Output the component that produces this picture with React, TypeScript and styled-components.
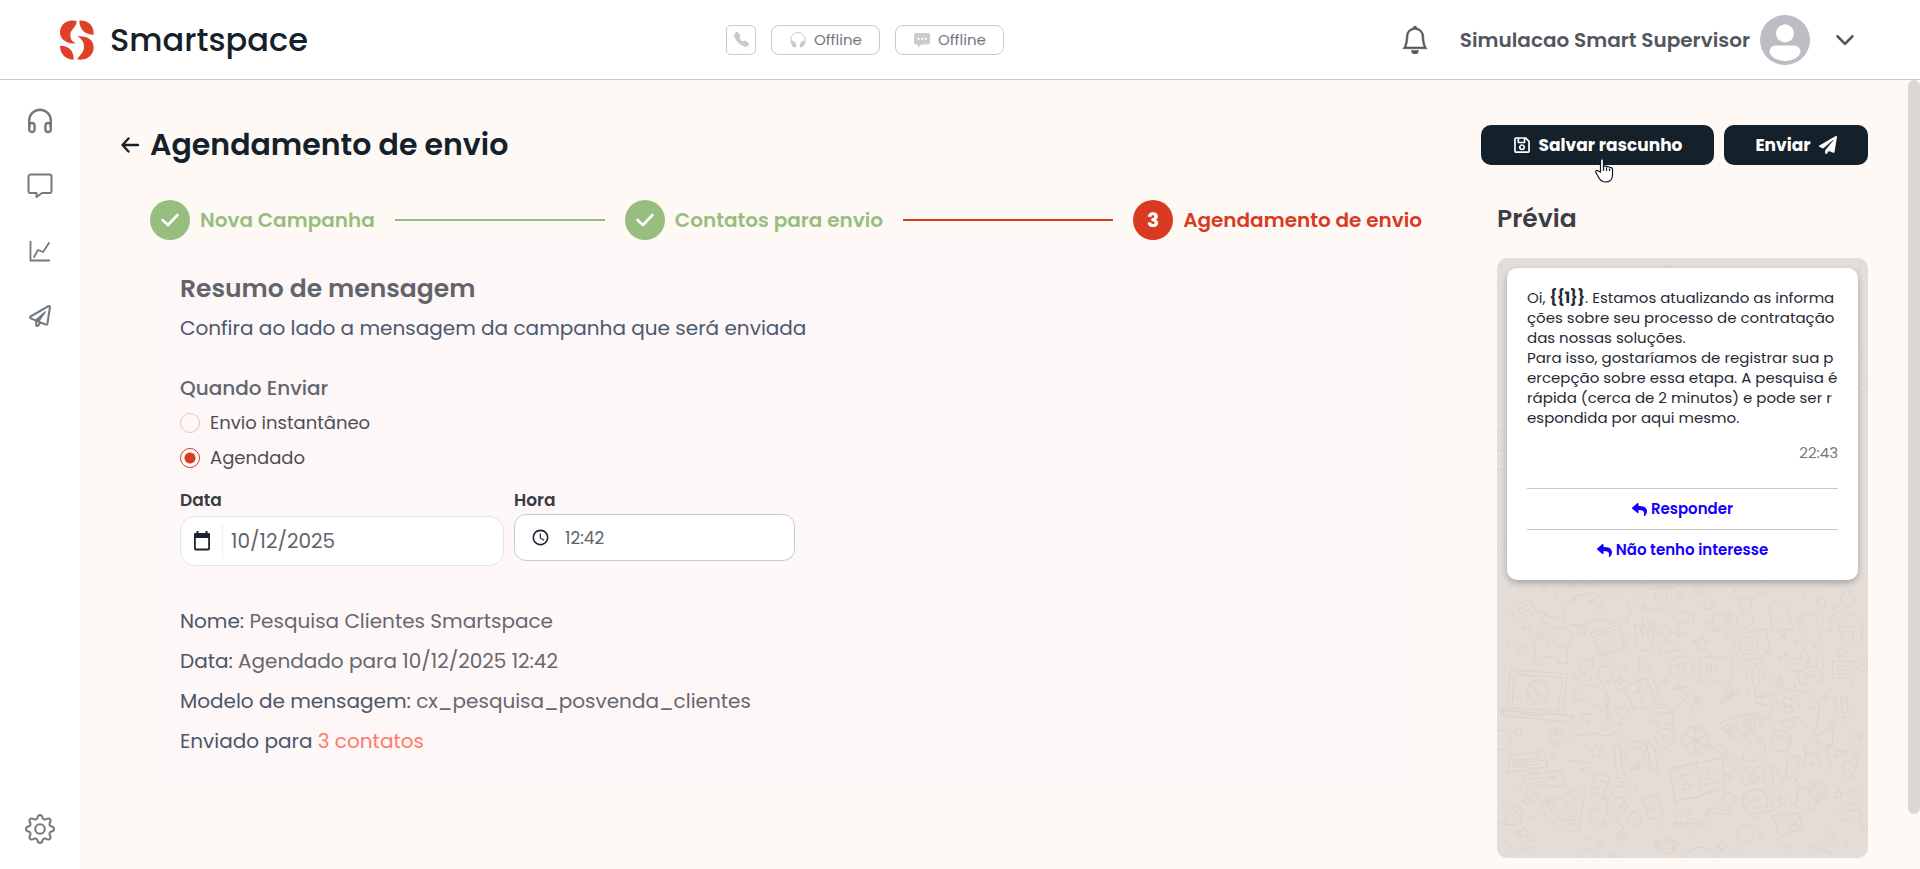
import React, { useState } from 'react';
import styled, { createGlobalStyle } from 'styled-components';
import { BsBell, BsChevronDown, BsTelephoneFill } from 'react-icons/bs';
import { FaPaperPlane, FaRegPaperPlane, FaRegSave, FaReply } from 'react-icons/fa';
import { MdAccessTime } from 'react-icons/md';

const GlobalStyle = createGlobalStyle`
  *, *::before, *::after { box-sizing: border-box; }
  body { margin: 0; background: #fff9f5; font-family: Poppins, Inter, "Liberation Sans", sans-serif; color: #14212a; }
  button, input { font: inherit; }
  h1, h2, h3, p, ol, ul, fieldset { margin: 0; padding: 0; border: 0; }
  svg { display: block; flex: none; }
`;

const Page = styled.div`
  display: flex;
  flex-direction: column;
  min-height: 100vh;
`;

const Header = styled.header`
  display: flex;
  align-items: center;
  justify-content: space-between;
  height: 80px;
  padding: 0 60px;
  background: #fff;
  border-bottom: 1px solid #c9c9c9;
`;

const Brand = styled.a`
  display: flex;
  align-items: center;
  gap: 16px;
  padding-right: 22px;
  color: #14212a;
  text-decoration: none;
  font-size: 32px;
  font-weight: 500;
  line-height: 40px;
`;

const StatusGroup = styled.div`
  display: flex;
  gap: 15px;
`;

const StatusButton = styled.button<{ $square?: boolean }>`
  display: flex;
  align-items: center;
  justify-content: center;
  gap: ${({ $square }) => ($square ? 0 : 8)}px;
  width: ${({ $square }) => ($square ? 30 : 109)}px;
  height: 30px;
  padding: 0;
  border: 1px solid #c7cbcd;
  border-radius: ${({ $square }) => ($square ? 5 : 8)}px;
  background: #fff;
  color: #737480;
  font-size: 15px;

  svg { color: #c7cbcb; }
`;

const UserArea = styled.div`
  display: flex;
  align-items: center;
  justify-content: flex-end;
`;

const IconButton = styled.button`
  display: flex;
  align-items: center;
  justify-content: center;
  padding: 0;
  border: 0;
  background: none;
  color: inherit;
`;

const Bell = styled(IconButton)`
  margin-right: 31px;
  color: #54555f;
`;

const UserName = styled.span`
  margin-right: 10px;
  color: #54555f;
  font-size: 20px;
  font-weight: 600;
`;

const UserMenu = styled(IconButton)`
  margin: 0 5px 0 25px;
  color: #54555f;
`;

const Body = styled.div`
  display: flex;
  flex: 1;
`;

const Sidebar = styled.nav`
  display: flex;
  flex-direction: column;
  align-items: center;
  justify-content: space-between;
  width: 80px;
  padding: 26px 0 25px;
  background: #fff;
`;

const SideList = styled.ul`
  display: flex;
  flex-direction: column;
  gap: 35px;
  list-style: none;
`;

const SideLink = styled.a`
  display: flex;
  align-items: center;
  justify-content: center;
  width: 30px;
  height: 30px;
  color: #727a80;
`;

const Main = styled.main`
  flex: 1;
  min-width: 0;
  padding: 45px 40px 10px;
`;

const TitleRow = styled.div`
  display: flex;
  align-items: center;
  justify-content: space-between;
  height: 40px;
`;

const TitleGroup = styled.div`
  display: flex;
  align-items: center;
  gap: 10px;
`;

const Title = styled.h1`
  font-size: 30px;
  font-weight: 600;
  line-height: 40px;
`;

const Actions = styled.div`
  display: flex;
  gap: 10px;
`;

const ActionButton = styled.button<{ $width: number }>`
  position: relative;
  display: flex;
  align-items: center;
  justify-content: center;
  gap: 8px;
  width: ${({ $width }) => $width}px;
  height: 40px;
  padding: 0;
  border: 0;
  border-radius: 10px;
  background: #14212a;
  color: #fff;
  font-size: 17px;
  font-weight: 700;
`;

const Pointer = styled.svg`
  position: absolute;
  left: 114px;
  top: 33px;
`;

const Columns = styled.div`
  display: flex;
  align-items: flex-start;
  gap: 75px;
  padding: 35px 0 0 30px;
`;

const Wizard = styled.section`
  flex: 1;
  min-width: 0;
`;

const Steps = styled.ol`
  display: flex;
  align-items: center;
  gap: 20px;
  list-style: none;
`;

const Step = styled.li<{ $color: string }>`
  display: flex;
  align-items: center;
  gap: 10px;
  color: ${({ $color }) => $color};
  font-size: 20px;
  font-weight: 600;
  white-space: nowrap;
`;

const StepMark = styled.span<{ $color: string }>`
  display: flex;
  align-items: center;
  justify-content: center;
  width: 40px;
  height: 40px;
  border-radius: 50%;
  background: ${({ $color }) => $color};
  color: #fff;
  font-weight: 700;
`;

const StepLine = styled.li<{ $color: string }>`
  flex: 1;
  height: 2px;
  background: ${({ $color }) => $color};
`;

const Panel = styled.div`
  padding: 29px 30px 24px;
  border-radius: 10px;
  background: #fdf7f7;
`;

const PanelTitle = styled.h2`
  color: #62646b;
  font-size: 25px;
  font-weight: 600;
  line-height: 39px;
`;

const Lead = styled.p`
  margin-bottom: 20px;
  color: #4b5870;
  font-size: 20px;
  line-height: 40px;
`;

const Options = styled.fieldset`
  display: flex;
  flex-direction: column;
  color: #4d4e54;
  font-size: 18px;
`;

const Legend = styled.legend`
  padding: 0;
  color: #62676e;
  font-size: 20px;
  font-weight: 500;
  line-height: 40px;
`;

const Option = styled.label`
  display: flex;
  align-items: center;
  gap: 10px;
  height: 35px;
  padding-bottom: 6px;
`;

const Radio = styled.input`
  appearance: none;
  width: 20px;
  height: 20px;
  margin: 0;
  border: 1px solid #f4c0b8;
  border-radius: 50%;

  &:checked {
    border-color: #d93a22;
    background: radial-gradient(circle, #d93a22 0 5px, #fff 6px);
  }
`;

const Schedule = styled.div`
  display: flex;
  align-items: flex-start;
  gap: 10px;
  padding: 8px 0 35px;
`;

const Field = styled.div`
  display: flex;
  flex-direction: column;
`;

const FieldLabel = styled.label`
  color: #3a3b42;
  font-size: 17px;
  font-weight: 600;
  line-height: 28px;
`;

const InputBox = styled.div<{ $large?: boolean }>`
  display: flex;
  align-items: center;
  width: ${({ $large }) => ($large ? 324 : 281)}px;
  height: ${({ $large }) => ($large ? 50 : 47)}px;
  margin-top: ${({ $large }) => ($large ? 2 : 0)}px;
  padding-left: ${({ $large }) => ($large ? 12 : 16)}px;
  border: 1px solid ${({ $large }) => ($large ? '#e0e5f0' : '#c4ccd2')};
  border-radius: ${({ $large }) => ($large ? 15 : 12)}px;
  background: #fff;
  color: #1c222e;
  font-size: ${({ $large }) => ($large ? 20 : 17)}px;
`;

const TextInput = styled.input<{ $divided?: boolean }>`
  flex: 1;
  min-width: 0;
  height: 33px;
  margin-left: ${({ $divided }) => ($divided ? 11 : 7)}px;
  padding: 0 8px;
  border: 0;
  border-left: ${({ $divided }) => ($divided ? '1px solid #eeeef2' : '0')};
  background: none;
  color: #62646b;
  outline: none;
`;

const Summary = styled.div`
  color: #4b5668;
  font-size: 20px;
  line-height: 40px;
`;

const Value = styled.span`
  color: #66676f;
`;

const ContactsLink = styled.a`
  color: #ff7a66;
  text-decoration: none;
`;

const Aside = styled.aside`
  flex: none;
  width: 371px;
`;

const AsideTitle = styled.h2`
  margin-bottom: 20px;
  color: #3d3e45;
  font-size: 25px;
  font-weight: 600;
  line-height: 38px;
`;

const Preview = styled.div`
  position: relative;
  height: 600px;
  padding: 10px;
  overflow: hidden;
  border-radius: 10px;
  background: #e4dcd6;
`;

const Wallpaper = styled.svg`
  position: absolute;
  inset: 0;
`;

const Bubble = styled.article`
  position: relative;
  padding: 20px 20px 10px;
  border-radius: 10px;
  background: #fff;
  box-shadow: 0 3px 6px rgba(0, 0, 0, 0.25);
  color: #262a35;
  font-size: 15px;
  line-height: 20px;
`;

const Message = styled.p`
  white-space: pre;
`;

const Time = styled.p`
  margin: 15px 0 25px;
  color: #77787f;
  text-align: right;
`;

const ReplyButton = styled.button`
  display: flex;
  align-items: center;
  justify-content: center;
  gap: 4px;
  width: 100%;
  height: 41px;
  padding: 0;
  border: 0;
  border-top: 1px solid #c9c9c9;
  background: none;
  color: #1400ff;
  font-weight: 600;
`;

const ScrollTrack = styled.div`
  width: 12px;
`;

const ScrollThumb = styled.div`
  height: 734px;
  border-radius: 6px;
  background: #d9d8d6;
`;

const GREEN = '#98be7f';
const RED = '#d93a22';

const LogoMark = () => (
  <svg width="34" height="40" viewBox="30 29 102 120" fill="#de4128" aria-hidden="true">
    <path d="M80 32C50 25 30 43 30 66c0 22 20 36 48 33C69 94 60 88 61 72c1-16 18-20 19-40Z" />
    <path d="M88 31c26-2 44 15 43 42C106 73 89 58 88 31Z" />
    <path d="M30 106c26-1 42 15 41 42-23 0-41-17-41-42Z" />
    <path d="M82 78c29-3 49 10 49 33 0 25-21 41-49 36 1-9 20-17 20-38 0-15-10-26-20-31Z" />
  </svg>
);

const Headphones = () => (
  <svg width="26" height="26" viewBox="0 0 26 26" fill="none" stroke="currentColor" strokeWidth="2.4" aria-hidden="true">
    <path d="M2.200 20V12.500a10.800 10.800 0 0 1 21.600 0V20" />
    <rect x="2.200" y="15" width="5.400" height="9" rx="2.700" />
    <rect x="18.400" y="15" width="5.400" height="9" rx="2.700" />
  </svg>
);

const HeadphonesSolid = () => (
  <svg width="16" height="16" viewBox="0 0 16 16" fill="currentColor" aria-hidden="true">
    <path d="M1 11V7.500a7 7 0 0 1 14 0V11" fill="none" stroke="currentColor" />
    <path d="M1 9c3-1 5 1 5.400 6C3.500 16.500 1 14 1 9ZM15 9c-3-1-5 1-5.400 6C12.500 16.500 15 14 15 9Z" />
  </svg>
);

const ChatOutline = () => (
  <svg width="26" height="26" viewBox="0 0 26 26" fill="none" stroke="currentColor" strokeWidth="2" strokeLinejoin="round" aria-hidden="true">
    <path d="M3.500 1.500h19a2 2 0 0 1 2 2V18a2 2 0 0 1-2 2H15l-5.500 4V20h-6a2 2 0 0 1-2-2V3.500a2 2 0 0 1 2-2Z" />
  </svg>
);

const ChatSolid = () => (
  <svg width="16" height="16" viewBox="0 0 16 16" aria-hidden="true">
    <path d="M2 1h12a2 2 0 0 1 2 2v7.500a2 2 0 0 1-2 2H7.500L4 15.500v-3H2a2 2 0 0 1-2-2V3a2 2 0 0 1 2-2Z" fill="currentColor" />
    <path d="M4.500 6.800h.1M8 6.800h.1M11.500 6.800h.1" stroke="#fff" strokeWidth="2.200" strokeLinecap="round" />
  </svg>
);

const CalendarIcon = () => (
  <svg width="18" height="20" viewBox="0 0 18 20" aria-hidden="true">
    <rect x="1.900" y="3" width="14.200" height="15.500" rx="1" fill="none" stroke="currentColor" strokeWidth="1.800" />
    <path d="M1 2.500h16V7H1ZM3.500 0h2v3h-2ZM12.500 0h2v3h-2Z" fill="currentColor" />
  </svg>
);

const GEAR_OUTLINE = Array.from({ length: 96 }, (_, i) => {
  const angle = (i * Math.PI) / 48;
  const wave = Math.cos(8 * angle);
  const radius = 12.2 + 1.8 * Math.sign(wave) * Math.pow(Math.abs(wave), 0.6);
  return `${i ? 'L' : 'M'}${(15 + radius * Math.sin(angle)).toFixed(2)} ${(15 - radius * Math.cos(angle)).toFixed(2)}`;
}).join('') + 'Z';

const GearIcon = () => (
  <svg width="30" height="30" viewBox="0 0 30 30" fill="none" stroke="currentColor" strokeWidth="2" strokeLinejoin="round" aria-hidden="true">
    <path d={GEAR_OUTLINE} />
    <circle cx="15" cy="15" r="4.800" />
  </svg>
);

const LineChart = () => (
  <svg width="22" height="22" viewBox="0 0 22 22" fill="none" stroke="currentColor" strokeWidth="1.800" aria-hidden="true">
    <path d="M1.500 1v19.500H21" />
    <path d="M5 17l4-7 5 2 6-9" strokeLinecap="round" strokeLinejoin="round" />
  </svg>
);

const ArrowBack = () => (
  <svg width="20" height="20" viewBox="0 0 20 20" fill="none" stroke="currentColor" strokeWidth="2.400" strokeLinecap="round" strokeLinejoin="round" aria-hidden="true">
    <path d="M18 10H3M8.500 3.500L2.500 10l6 6.500" />
  </svg>
);

const Avatar = () => (
  <svg width="50" height="50" viewBox="0 0 50 50" aria-hidden="true">
    <circle cx="25" cy="25" r="25" fill="#bcbdc4" />
    <circle cx="25" cy="18.300" r="9" fill="#fff" />
    <path d="M9.500 37c0-4 3-6.500 7-6.500h17c4 0 7 2.500 7 6.500-1 5-8 9-15.500 9s-14.500-4-15.500-9Z" fill="#fff" />
  </svg>
);

const CheckMark = () => (
  <svg width="20" height="16" viewBox="0 0 20 16" fill="none" stroke="currentColor" strokeWidth="2.600" strokeLinecap="round" strokeLinejoin="round" aria-hidden="true">
    <path d="M2.500 8l5.500 5L17.500 3" />
  </svg>
);

const HandPointer = () => (
  <Pointer width="19" height="25" viewBox="0 0 19 25" fill="#fff" stroke="#14162c" strokeWidth="1.200" aria-hidden="true">
    <path d="M5.500 14V2.500c0-2.200 3-2.200 3 0V9c.3-1.500 3-1.500 3 .3.500-1.300 3-1.100 3 .8.500-1 3-.8 3 1.200V17c0 4-2.500 7-7 7-3.500 0-5-1.500-6.500-4L1 14.800c-1-2 1-3 2.300-1.800Z" />
    <path d="M8.500 9v4M11.500 9.500V13M14.500 10.500V13" />
  </Pointer>
);

const star = (x: number, y: number, r: number) =>
  `M${x} ${y - r}L${x + r * 0.300} ${y - r * 0.350}L${x + r} ${y - r * 0.300}L${x + r * 0.450} ${y + r * 0.200}L${x + r * 0.600} ${y + r * 0.900}L${x} ${y + r * 0.500}L${x - r * 0.600} ${y + r * 0.900}L${x - r * 0.450} ${y + r * 0.200}L${x - r} ${y - r * 0.300}L${x - r * 0.300} ${y - r * 0.350}Z`;

const spark = (x: number, y: number, r: number) =>
  `M${x} ${y - r}Q${x} ${y} ${x + r} ${y}Q${x} ${y} ${x} ${y + r}Q${x} ${y} ${x - r} ${y}Q${x} ${y} ${x} ${y - r}Z`;

const heart = (x: number, y: number, r: number) =>
  `M${x} ${y + r}C${x - r * 2} ${y - r * 0.300} ${x - r * 0.700} ${y - r * 1.500} ${x} ${y - r * 0.400}C${x + r * 0.700} ${y - r * 1.500} ${x + r * 2} ${y - r * 0.300} ${x} ${y + r}Z`;

const STARS: [number, number, number][] = [[198, 117, 20], [307, 152, 15], [685, 74, 20], [665, 190, 25], [1026, 65, 16], [1059, 118, 15], [1086, 218, 16], [114, 456, 15], [349, 514, 21], [620, 618, 16], [908, 664, 15], [1077, 642, 14], [1074, 519, 14], [130, 758, 17], [422, 768, 17], [278, 12, 12]];
const SPARKS: [number, number, number][] = [[848, 42, 16], [598, 158, 17], [419, 303, 14], [558, 306, 14], [802, 268, 17], [1037, 352, 13], [143, 662, 18], [433, 677, 18], [749, 588, 13], [725, 798, 18], [401, 828, 12]];
const HEARTS: [number, number, number][] = [[126, 212, 18], [356, 88, 12], [426, 396, 18], [1126, 487, 16], [1149, 262, 15], [778, 808, 13]];
const ROUNDS: [number, number, number][] = [[551, 50, 25], [551, 50, 12], [603, 262, 34], [806, 197, 27], [1104, 58, 23], [375, 281, 23], [795, 120, 25], [174, 334, 34], [174, 334, 26], [555, 474, 29], [646, 482, 43], [646, 482, 34], [646, 482, 9], [465, 526, 42], [229, 472, 25], [229, 472, 15], [62, 480, 30], [1012, 636, 27], [1012, 636, 18], [239, 674, 20], [289, 678, 19], [465, 718, 20], [465, 718, 9], [606, 719, 19], [795, 760, 27], [826, 664, 38], [748, 657, 20], [821, 592, 16], [821, 592, 8], [926, 388, 11], [560, 800, 23], [1055, 770, 16], [1055, 770, 7], [1118, 638, 16], [1118, 638, 7], [655, 31, 16], [655, 31, 7], [115, 703, 14]];

const DOTS: [number, number, number][] = Array.from({ length: 330 }, (_, i) => [
  62 + ((i * 397) % 1090),
  -940 + ((i * 613 + (i % 7) * 31) % 1750),
  3 + (i % 4),
]);

const DOODLES = [
  'M88 84l64-26 18 40-55 27-9-12ZM112 90l30-13M115 102l32-14',
  'M254 126c-8-28 8-66 40-80l50-8c20 12 2 24-18 24l34 12c40-36 64-50 90 8l4 22c-24 8-36 28-58 28-22-10-50-24-64-6-28 12-52 12-78 0Z',
  'M464 66c30-52 110-60 140-24-18 56-110 62-140 24',
  'M332 160l86-27 27 70-86 26ZM345 167l70-21 19 54-71 22ZM363 209l22-25 18 10 18-14',
  'M470 180l-7-45h16l8 35v-58h17v55l16-50h6l-8 68c0 40-53 38-50-5',
  'M538 218c-6-53 64-36 68-10ZM545 157c0-22 30-22 30 0 0 26-30 26-30 0',
  'M582 101c15-13 36-1 60 2l-2 26-55-3Z',
  'M676 132c-3-30 28-47 64-30 32 27-10 82-64 30ZM676 132l18-6m0 0 21 21 26-20-12-26-28 7Z',
  'M784 80c-15-28-7-32 10-19 18-22 33-10 15 25l-18 23M788 80v30',
  'M868 82c12-23 37-18 53 2l20 65-63 2ZM899 151l5 20 12-2-3-20M885 112h3m15-4h4m-15 20c4 7 12 3 14-5',
  'M955 108c36-10 80-12 75 25l-17 20 9 27c-30 15-50-1-46-32l-24-13Z',
  'M1077 139c-4-22 18-37 26-39 30 8 26 26 44 36l-4 54-20 15-34-17ZM1077 139l70 2M1090 145l8 38m22-38v42',
  'M757 166l100-20 15 70-25 10 5 17-27-9-49 12Z',
  'M661 232h94v73h-62l-12 14-4-14h-16ZM680 249v32m0-15h14m0-17v32m16-22v22m0-32v4',
  'M145 132c-1 35 11 50 19 58l-2 60 21 4 7-25h41l6 23 25-2-1-45M146 132c12 0 6 26 24 48l29-12c10-40 72-30 78 4l-6 25-25 3-26-12c-8 23-20 20-18-14',
  'M914 218l20 17 28-3 11-26 14 30-12 32c-20 13-42 7-51-12ZM970 260l10 5 30-8 5-48 10 9c12 41 4 50-2 56l7 25-20 4-11-18-20 6 1 24-19 1-7-33',
  'M277 282l38-43 26-2-4 24-42 35-17-4ZM317 240l17 18m-41 8 18 16',
  'M475 238l36 24-37 22 7-22Z',
  'M90 269l172 13-15 124-165-14ZM105 284l142 9-12 100-140-9ZM58 388l60 6 4 8 68 4 6-8 82 11-6 19-208-23ZM150 356l-8 6 4-18m14-22c-4 16 15 32 28 24l-9-8-8 2-5-10 6-4Z',
  'M284 364c-14-42 10-60 48-46 56 3 49 40 49 90 6 32 44 20 44 24-9 30-37 36-59 36-30-20-50 2-68-1-32-7-25-35-3-38l16-28 26-1-24 7m27-30c23-6 28 8 20 24M284 364l32-4m35-44 12-11 18 30 6 15-3 27 10 40',
  'M432 320l82-32 27 66-51 32-27-3ZM450 344l64-25m-43-18 20 86m8-90 28 60m-92-21 25 53',
  'M509 408l6-28 20-8 25 6 19 28-1 26-19 3-11-11-20 1-15 7ZM519 402l54-3m-48-14 40-3',
  'M577 329l54-8m-29-1 5 16m-15 49 36-50m-31 10 22 22M629 397l21-48h10l13 46h-12l-3-12-14 2-4 11ZM646 373l6-13 4 12Z',
  'M747 349c-32-48 20-44 3 0 17-38 47-15-2 1 41 21 16 43-1 1-25 35-45 17 0-2M747 349l-32 31',
  'M827 370l-2-48c-15-30-11-61 5-64l11 26-6 32 26-48 24 38 16-24-11 40 24-8-38 28-6 34ZM827 350l41-2',
  'M868 410l20-67 23-15 72 9c55 10 29 94 22 121l-30-21-17-23-28-2c-20 17-61 27-62-2ZM914 347l6 11 14-5 4 16-12 12-12-5-4-15ZM953 364l8 23m17-24 10 5m-5 14 17 1',
  'M721 428c31-12 64-23 109-31l10 20v23l-96 27-20-27ZM735 437l14-4-3 23-10 2Zm24-6 12-2-2 24-12 1Zm23-6h1m-2 20h1m10-27 12-3-4 24-12 3Zm23-7 13-3-3 25-14 4ZM795 430l12-4m11-5 11-3M750 476l78-22',
  'M879 450c12-2 51 10 56 17l-12 45c-21 7-47-1-48-12ZM878 452l9 17 39 12 9-14M926 483l10 4-4 14-12-1M908 440c-8-25 34-29 35-7l-13 14-11-8',
  'M973 500l25-32 26-3 12-20 23 5-2 42-39 25-44 6ZM984 510l-16 50m44-44 9 42m16-44 15 40M990 487h36',
  'M87 527l107-13 9 47-97 13-27 4 9-15ZM98 544l80-11m-78 21 88-13m-86 20 78-9',
  'M131 586l116-14 3 22 6 12-9 11-103 12ZM145 598l84-9m-80 20 50-6m-46 16 52-7',
  'M276 541l60 9-15 33-15-10-3-18M303 573l22-18',
  'M345 577l25 7 20 9-26 72-19 8-14-16ZM346 599l40 10m-45 10 40 11m-46 9 37 10',
  'M404 505l14-18 6 62 14 45h-27l-4-50ZM498 483l25 21 13 74-25-13ZM435 508l20 7m17-9 14-6m-41 48 22 3 18-12m-51-21c12-28 51-26 60 9-21 53-54 39-60-9',
  'M569 565l75-16 84-14 5 93-61 12-10 10-77 13ZM579 570l70-20 18 97-71 14M594 590l40-7m21-20 7 12 15-18m-10 31 46-11m-44 24 30-5m-26 19 44-9',
  'M390 647l18-26 24-5 13 12-3 19-27 7Z',
  'M317 617l-20 139c-50 1-100-33-116-84l19-6 16 27c25 23 38 34 83 45M200 664l106-41m-43 89 21-6 4 11-25 4Z',
  'M353 689l24 4 7 14-13 13 11 20-25 3-8-14-25 3 13-22-13-16ZM377 668l16 6 28 56 11 22-34-46-15-8Z',
  'M484 656l47-12 20 58-42 17ZM502 677l-8 9 13 7m9-26 8 13-8 11m-5-26-2 28',
  'M785 570l20-8 16 3 28-4 4 42-65 12ZM795 659l14-29c61-8 74 39 69 64l-26 2-19 22-34-16-11-29',
  'M870 560l17-2 25 58-8 10-20-10ZM921 538l23-11 12 33-19 31-18 2Z',
  'M957 620l62 12-17 65-35-4-20-17ZM875 707l80-7 14 48-67 17ZM897 712l38 30 27-39M884 724l10 35m51-39 15 30',
  'M783 660l13-4 19 7 31-12m-23 30c13 6 24 4 33-7M785 538l7-28 34-35 22 3 9 20-6 29-35 20Z',
  'M705 503l16-12 54 79-10 3-29-38-20-20',
  'M1123 520l12 4-7 34-5 20-9 18-19-2-8-28 10-23 18 2ZM1103 566h10M1069 356v34c0 30 49 30 48-4M1082 355l20-4 2 42-15 8ZM1094 411v20',
  'M1079 700l6-23 24-8 20 6 15 24-2 24-22-3-10-7-28 8ZM1088 694l45-6',
  'M452 701l17-10m70 45-17-8m55 4c30-8 59 5 80-4l20 8-32 6-58-9ZM684 688l30-5 15 7 30 2-10 10-40-3-24 4Z',
  'M523 800c9-18 81-23 73-8-14 16-51 24-73 8M614 835c6-42 93-45 91 0M304 832c8-31 41-30 50 0M979 794l84 30M991 812c17-39 46-13 52 12',
  'M62 734l40-53 14-7c17 24 6 60-1 62l-56-4M56 808c10-34 33-21 38-10l-11 17M109 827l20-22 36-5-10 18',
  'M1058 242l67 1-6 50-61 2ZM1070 258l40-2m-38 14 38-3m-36 15 22-2',
];

const LAYER_SHIFTS = [0, -840];

const PatternLayer = () => (
  <Wallpaper width="371" height="600" viewBox="0 0 371 600" fill="none" stroke="#dbd2cb" aria-hidden="true">
    {LAYER_SHIFTS.map((shift) => (
      <g key={shift} transform={`translate(-17 ${322 + shift / 3}) scale(0.3333)`} strokeWidth="2.800" strokeLinejoin="round">
        {DOODLES.map((d) => <path key={d} d={d} />)}
        {STARS.map(([x, y, r]) => <path key={`s${x}`} d={star(x, y, r)} />)}
        {SPARKS.map(([x, y, r]) => <path key={`p${x}`} d={spark(x, y, r)} />)}
        {HEARTS.map(([x, y, r]) => <path key={`h${x}`} d={heart(x, y, r)} />)}
        {ROUNDS.map(([x, y, r]) => <circle key={`${x}-${y}-${r}`} cx={x} cy={y} r={r} />)}
      </g>
    ))}
    <g transform="translate(-17 322) scale(0.3333)" strokeWidth="2.800">
      {DOTS.map(([x, y, r]) => <circle key={`${x}-${y}`} cx={x} cy={y} r={r} />)}
      {[0, 60, 120].map((a) => <path key={a} d="M646 440v84" transform={`rotate(${a} 646 482)`} />)}
      <path d="M549 463l20 11-20 11ZM587 252l12 2-5 11-8-4Zm20 1 13-4-2 12-7 4ZM589 273c8 18 28 8 30-5M790 190h12m9-1 12 1m-29 10c6 22 26 15 27-4" />
    </g>
  </Wallpaper>
);

const MESSAGE_TAIL = `. Estamos atualizando as informa
ções sobre seu processo de contratação
das nossas soluções.
Para isso, gostaríamos de registrar sua p
ercepção sobre essa etapa. A pesquisa é
rápida (cerca de 2 minutos) e pode ser r
espondida por aqui mesmo.`;

export default function App() {
  const [mode, setMode] = useState('agendado');
  const [date, setDate] = useState('10/12/2025');
  const [time, setTime] = useState('12:42');

  return (
    <Page>
      <GlobalStyle />
      <Header>
        <Brand href="#"><LogoMark />Smartspace</Brand>
        <StatusGroup>
          <StatusButton $square aria-label="Telefone"><BsTelephoneFill size={15} /></StatusButton>
          <StatusButton><HeadphonesSolid />Offline</StatusButton>
          <StatusButton><ChatSolid />Offline</StatusButton>
        </StatusGroup>
        <UserArea>
          <Bell aria-label="Notificações"><BsBell size={28} strokeWidth={0.3} /></Bell>
          <UserName>Simulacao Smart Supervisor</UserName>
          <Avatar />
          <UserMenu aria-label="Menu do usuário"><BsChevronDown size={20} strokeWidth={1} /></UserMenu>
        </UserArea>
      </Header>
      <Body>
        <Sidebar aria-label="Principal">
          <SideList>
            <li><SideLink href="#" aria-label="Atendimento"><Headphones /></SideLink></li>
            <li><SideLink href="#" aria-label="Conversas"><ChatOutline /></SideLink></li>
            <li><SideLink href="#" aria-label="Relatórios"><LineChart /></SideLink></li>
            <li><SideLink href="#" aria-label="Campanhas"><FaRegPaperPlane size={22} /></SideLink></li>
          </SideList>
          <SideLink href="#" aria-label="Configurações"><GearIcon /></SideLink>
        </Sidebar>
        <Main>
          <TitleRow>
            <TitleGroup>
              <IconButton aria-label="Voltar"><ArrowBack /></IconButton>
              <Title>Agendamento de envio</Title>
            </TitleGroup>
            <Actions>
              <ActionButton $width={233}><FaRegSave size={18} />Salvar rascunho<HandPointer /></ActionButton>
              <ActionButton $width={144}>Enviar<FaPaperPlane size={18} /></ActionButton>
            </Actions>
          </TitleRow>
          <Columns>
            <Wizard>
              <Steps>
                <Step $color={GREEN}><StepMark $color={GREEN}><CheckMark /></StepMark>Nova Campanha</Step>
                <StepLine $color={GREEN} aria-hidden="true" />
                <Step $color={GREEN}><StepMark $color={GREEN}><CheckMark /></StepMark>Contatos para envio</Step>
                <StepLine $color={RED} aria-hidden="true" />
                <Step $color={RED} aria-current="step"><StepMark $color={RED}>3</StepMark>Agendamento de envio</Step>
              </Steps>
              <Panel>
                <PanelTitle>Resumo de mensagem</PanelTitle>
                <Lead>Confira ao lado a mensagem da campanha que será enviada</Lead>
                <Options>
                  <Legend>Quando Enviar</Legend>
                  <Option>
                    <Radio type="radio" name="modo" checked={mode === 'instantaneo'} onChange={() => setMode('instantaneo')} />
                    Envio instantâneo
                  </Option>
                  <Option>
                    <Radio type="radio" name="modo" checked={mode === 'agendado'} onChange={() => setMode('agendado')} />
                    Agendado
                  </Option>
                </Options>
                <Schedule>
                  <Field>
                    <FieldLabel htmlFor="data">Data</FieldLabel>
                    <InputBox $large>
                      <CalendarIcon />
                      <TextInput $divided id="data" value={date} onChange={(e) => setDate(e.target.value)} />
                    </InputBox>
                  </Field>
                  <Field>
                    <FieldLabel htmlFor="hora">Hora</FieldLabel>
                    <InputBox>
                      <MdAccessTime size={19} />
                      <TextInput id="hora" value={time} onChange={(e) => setTime(e.target.value)} />
                    </InputBox>
                  </Field>
                </Schedule>
                <Summary>
                  <p>Nome: <Value>Pesquisa Clientes Smartspace</Value></p>
                  <p>Data: <Value>Agendado para 10/12/2025 12:42</Value></p>
                  <p>Modelo de mensagem: <Value>cx_pesquisa_posvenda_clientes</Value></p>
                  <p>Enviado para <ContactsLink href="#">3 contatos</ContactsLink></p>
                </Summary>
              </Panel>
            </Wizard>
            <Aside>
              <AsideTitle>Prévia</AsideTitle>
              <Preview>
                <PatternLayer />
                <Bubble>
                  <Message>Oi, <b>{'{{1}}'}</b>{MESSAGE_TAIL}</Message>
                  <Time>22:43</Time>
                  <ReplyButton><FaReply size={15} />Responder</ReplyButton>
                  <ReplyButton><FaReply size={15} />Não tenho interesse</ReplyButton>
                </Bubble>
              </Preview>
            </Aside>
          </Columns>
        </Main>
        <ScrollTrack aria-hidden="true"><ScrollThumb /></ScrollTrack>
      </Body>
    </Page>
  );
}
